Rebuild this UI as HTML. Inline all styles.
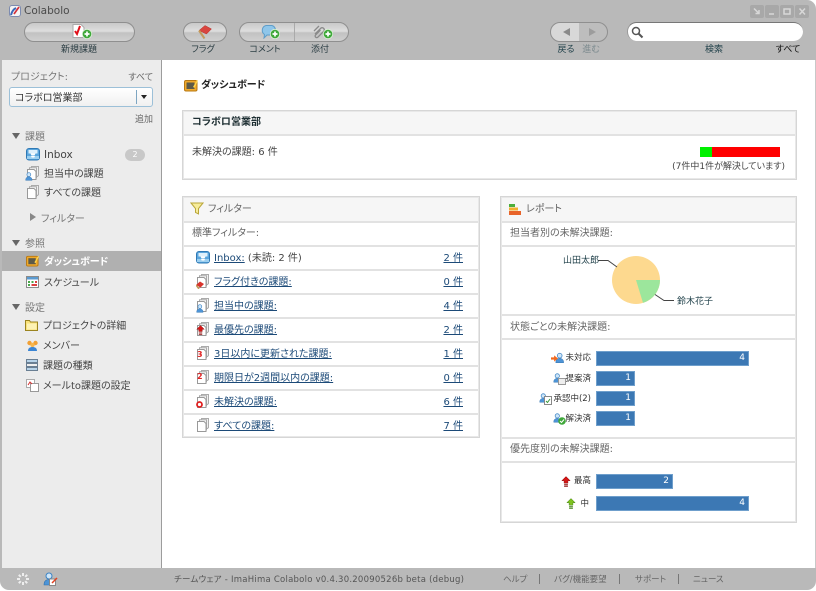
<!DOCTYPE html>
<html lang="ja"><head><meta charset="utf-8"><title>Colabolo</title>
<style>
html,body{margin:0;padding:0;background:#fff}
body{width:816px;height:591px;overflow:hidden;position:relative;font-family:"DejaVu Sans","Noto Sans CJK JP",sans-serif;font-size:10px;color:#444;font-feature-settings:"palt"}
.a{position:absolute;box-sizing:border-box}
.t{position:absolute;white-space:nowrap;line-height:16px;height:16px;font-size:10px;margin-top:3px}
.c{transform:translateX(-50%)}
.r{transform:translateX(-100%)}
.lb{font-size:9px;color:#2c3e44}
.sm{font-size:8.500px;color:#333}
.pill{position:absolute;box-sizing:border-box;height:20px;border:1px solid #8f8f8f;border-radius:10px;background:linear-gradient(#c9c9c9,#dedede 45%,#c2c2c2 55%,#cfcfcf)}
.p{position:absolute;box-sizing:border-box;border:1px solid #d6d6d6;box-shadow:0 0 0 1px #e8e8e8 inset}
.h{position:absolute;left:1px;right:1px;background:#f6f6f6}
.hr{position:absolute;left:1px;right:1px;height:2px;background:#e2e2e2}
a{color:#1c4a78;text-decoration:underline}
.bar{position:absolute;left:596px;height:15px;background:#3c78b4;border:1px solid #6f9fcc;box-sizing:border-box;color:#fff;text-align:right;font-size:9px;line-height:13px;padding-right:3px}
svg{position:absolute;display:block}
.tri{position:absolute;width:0;height:0}
.s{color:#555}
</style></head><body>
<svg width="0" height="0" style="position:absolute"><defs>
<symbol id="doc" viewBox="0 0 14 14"><path d="M5.500 .5h7v9l-1 1h-1V3.500h-5z" fill="#f0f0f0" stroke="#aaa"/><path d="M3.500 1.800h7v10h-7z" fill="#f4f4f4" stroke="#aaa"/><path d="M1.500 3.500h6.500l2 2v8h-8.500z" fill="#fff" stroke="#999"/></symbol>
<symbol id="inbox" viewBox="0 0 14 14"><rect x=".5" y="1.500" width="13" height="11.500" rx="2.500" fill="#5ba6dd" stroke="#2f79b5"/><rect x="2.500" y="3" width="9" height="3.500" fill="#dff0fb"/><path d="M4.500 6.500h5l-1 2h-3z" fill="#fff"/><path d="M1 9h12v3H1z" fill="#9bcff0"/><path d="M5 9l.7 1.500h2.600L9 9z" fill="#fff"/></symbol>
<symbol id="dash" viewBox="0 0 14 14"><rect x=".5" y="2.500" width="12.500" height="10.500" rx="1.500" fill="#f0aa2c" stroke="#b87812"/><rect x="2.500" y="4.500" width="8" height="6.500" fill="#5d5a48"/><path d="M9 9l4-7 1 .8-3.500 7z" fill="#ffd54a"/></symbol>
<symbol id="plus" viewBox="0 0 10 10"><circle cx="5" cy="5" r="4.700" fill="#3fa83a" stroke="#d9f0d4" stroke-width=".8"/><path d="M2.500 5h5M5 2.500v5" stroke="#fff" stroke-width="1.700"/></symbol>
<symbol id="user" viewBox="0 0 14 14"><circle cx="6" cy="4" r="3" fill="#cfe6f8" stroke="#3a82c4"/><path d="M1 13c0-4 2-5.500 5-5.500s5 1.500 5 5.500z" fill="#4d94d6" stroke="#2f70ad" stroke-width=".6"/></symbol>
<symbol id="upr" viewBox="0 0 12 14"><path d="M6 1l5 5H8.300v3H3.700V6H1z" fill="#d41616" stroke="#8c1010" stroke-width=".6"/><path d="M3.700 10.300h4.600v1.300H3.700zM3.700 12.300h4.600v1H3.700z" fill="#8c1010"/></symbol>
<symbol id="upg" viewBox="0 0 12 14"><path d="M6 1l5 5H8.300v3H3.700V6H1z" fill="#7fc21f" stroke="#3f7f12" stroke-width=".6"/><path d="M3.700 10.300h4.600v1.300H3.700zM3.700 12.300h4.600v1H3.700z" fill="#3f7f12"/></symbol>
</defs></svg>

<!-- chrome -->
<div class="a" style="left:0;top:0;width:816px;height:60px;background:#b9b9b9;border-radius:0 9px 0 0"></div>
<div class="a" style="left:0;top:60px;width:162px;height:508px;background:#ececec;border-left:2px solid #b9b9b9;border-right:1px solid #9c9c9c"></div>
<div class="a" style="left:0;top:568px;width:816px;height:22px;background:#b9b9b9;border-radius:0 0 9px 9px"></div>
<div class="a" style="left:815px;top:60px;width:1px;height:508px;background:#c8c8c8"></div>

<!-- title -->
<svg style="left:9px;top:5px" width="12" height="12" viewBox="0 0 12 12"><rect x=".5" y=".5" width="11" height="11" rx="2.500" fill="#f5f5f5" stroke="#7c8bb0"/><path d="M2 10c1-4 3-6 5-7" stroke="#3a68b8" stroke-width="2" fill="none"/><path d="M5 9l5-7" stroke="#d2303a" stroke-width="1.700"/></svg>
<div class="t" style="left:24px;top:0;font-size:10.500px;color:#4a4a4a">Colabolo</div>
<div class="a" style="left:750px;top:5px;width:14px;height:13px;background:#a8a8a8;border-radius:2px"></div>
<div class="a" style="left:765px;top:5px;width:14px;height:13px;background:#a8a8a8;border-radius:2px"></div>
<div class="a" style="left:780px;top:5px;width:14px;height:13px;background:#a8a8a8;border-radius:2px"></div>
<div class="a" style="left:795px;top:5px;width:14px;height:13px;background:#a8a8a8;border-radius:2px"></div>
<svg style="left:750px;top:5px" width="59" height="13" viewBox="0 0 59 13" fill="none" stroke="#d8d8d8" stroke-width="1.500"><path d="M4 3.500l5 5M9 5v3.500H5.500"/><path d="M19 9h5"/><rect x="34" y="4" width="6" height="5"/><path d="M49.500 3.500l5.500 6M55 3.500l-5.500 6"/></svg>

<!-- toolbar -->
<div class="pill" style="left:24px;top:22px;width:111px"></div>
<svg style="left:72px;top:24px" width="20" height="15" viewBox="0 0 20 15"><path d="M1 .5h8l3 3v10H1z" fill="#fff" stroke="#aaa"/><path d="M3 7l2 3 3-8" fill="none" stroke="#e0101a" stroke-width="2"/></svg>
<svg style="left:82px;top:29px" width="10" height="10"><use href="#plus"/></svg>
<div class="t c lb" style="left:79px;top:39px">新規課題</div>

<div class="pill" style="left:183px;top:22px;width:44px"></div>
<svg style="left:198px;top:24px" width="15" height="15" viewBox="0 0 15 15"><path d="M1 6.500l6-5 6.500 3.500-5 5z" fill="#d9453f" stroke="#b3322c" stroke-width=".5"/><path d="M1 6.500l5.500 8" stroke="#c49a5a" stroke-width="2"/></svg>
<div class="t c lb" style="left:203px;top:39px">フラグ</div>

<div class="pill" style="left:239px;top:22px;width:110px"></div>
<div class="a" style="left:294px;top:23px;width:1px;height:18px;background:#aaa"></div>
<svg style="left:260px;top:25px" width="18" height="14" viewBox="0 0 18 14"><path d="M6 .5h6a5 5 0 0 1 0 9.500H7L4 13l.5-3.500A5 5 0 0 1 6 .5z" fill="#8fc6ea" stroke="#5f9dc8"/></svg>
<svg style="left:270px;top:29px" width="10" height="10"><use href="#plus"/></svg>
<div class="t c lb" style="left:265px;top:39px">コメント</div>
<svg style="left:313px;top:25px" width="14" height="14" viewBox="0 0 14 14" fill="none" stroke="#8a8a8a" stroke-width="1.300"><path d="M2 9l6-6a2.200 2.200 0 0 1 3 3l-6 6a1.500 1.500 0 0 1-2.500-2l5-5"/><path d="M1 6l5-5"/></svg>
<svg style="left:323px;top:29px" width="10" height="10"><use href="#plus"/></svg>
<div class="t c lb" style="left:320px;top:39px">添付</div>

<div class="pill" style="left:550px;top:22px;width:58px;background:linear-gradient(90deg,#d8d8d8,#d8d8d8 50%,#bdbdbd 50%,#bdbdbd)"></div>
<div class="tri" style="left:563px;top:28px;border:4px solid transparent;border-left:0;border-right:7px solid #8a8a8a"></div>
<div class="tri" style="left:589px;top:28px;border:4px solid transparent;border-right:0;border-left:7px solid #9c9c9c"></div>
<div class="t c lb" style="left:566px;top:39px;color:#1e3f48">戻る</div>
<div class="t c lb" style="left:591px;top:39px;color:#7c8a8e">進む</div>

<div class="a" style="left:627px;top:22px;width:176px;height:19px;background:#fff;border-radius:10px;border-top:1px solid #777;border-left:1px solid #999"></div>
<svg style="left:631px;top:26px" width="13" height="13" viewBox="0 0 13 13" fill="none" stroke="#555" stroke-width="1.500"><circle cx="5" cy="5" r="3.500"/><path d="M7.500 7.500l4 4" stroke-width="2"/></svg>
<div class="t c lb" style="left:714px;top:39px;color:#1e3f48">検索</div>
<div class="t c lb" style="left:788px;top:39px;color:#111">すべて</div>

<!-- sidebar -->
<div class="t s" style="left:11px;top:67px;color:#777">プロジェクト:</div>
<div class="t r lb" style="left:153px;top:67px;color:#666">すべて</div>
<div class="a" style="left:9px;top:87px;width:144px;height:20px;background:linear-gradient(#fff,#f0f0f0);border:1px solid #9cc0d8;border-radius:3px"></div>
<div class="a" style="left:136px;top:90px;width:1px;height:14px;background:#7ea6c2"></div>
<div class="tri" style="left:141px;top:95px;border:3px solid transparent;border-bottom:0;border-top:4px solid #222"></div>
<div class="t" style="left:15px;top:88px;color:#333">コラボロ営業部</div>
<div class="t r lb" style="left:153px;top:109px;color:#666">追加</div>

<div class="tri" style="left:12px;top:133px;border:4px solid transparent;border-bottom:0;border-top:6px solid #666"></div>
<div class="t" style="left:25px;top:127px;color:#777">課題</div>
<svg style="left:26px;top:147px" width="14" height="14"><use href="#inbox"/></svg>
<div class="t" style="left:44px;top:144px;font-size:10.500px;color:#444">Inbox</div>
<div class="a" style="left:125px;top:149px;width:20px;height:12px;background:#c8c8c8;border-radius:6px;color:#fff;font-size:8px;line-height:12px;text-align:center">2</div>
<svg style="left:26px;top:166px" width="14" height="14"><use href="#doc"/></svg>
<svg style="left:25px;top:172px" width="9" height="9"><use href="#user"/></svg>
<div class="t" style="left:44px;top:164px">担当中の課題</div>
<svg style="left:26px;top:185px" width="14" height="14"><use href="#doc"/></svg>
<div class="t" style="left:44px;top:183px">すべての課題</div>
<div class="tri" style="left:30px;top:213px;border:4px solid transparent;border-right:0;border-left:6px solid #888"></div>
<div class="t" style="left:41px;top:209px;color:#777">フィルター</div>

<div class="tri" style="left:12px;top:240px;border:4px solid transparent;border-bottom:0;border-top:6px solid #666"></div>
<div class="t" style="left:25px;top:234px;color:#777">参照</div>
<div class="a" style="left:2px;top:251px;width:159px;height:20px;background:#b0b0b0"></div>
<svg style="left:26px;top:254px" width="13" height="13"><use href="#dash"/></svg>
<div class="t" style="left:44px;top:252px;color:#fff;font-weight:bold">ダッシュボード</div>
<svg style="left:26px;top:276px" width="13" height="12" viewBox="0 0 13 12"><rect x=".5" y=".5" width="12" height="11" fill="#fff" stroke="#8a8a8a"/><path d="M1 1h11v2.500H1z" fill="#5a9ad0"/><path d="M2 5h2v2H2zM5.500 5h2v2h-2zM2 8h2v2H2z" fill="#4aa84a"/><path d="M9 5h2v2H9zM5.500 8h5.500v2H5.500z" fill="#d84040"/></svg>
<div class="t" style="left:44px;top:273px">スケジュール</div>

<div class="tri" style="left:12px;top:304px;border:4px solid transparent;border-bottom:0;border-top:6px solid #666"></div>
<div class="t" style="left:25px;top:298px;color:#777">設定</div>
<svg style="left:25px;top:319px" width="13" height="12" viewBox="0 0 13 12"><path d="M.5 1.500h4l1 1.500h7v8.500H.500z" fill="#f9e27a" stroke="#9b8420"/><path d="M2 4.500h9.500v6H2z" fill="#fdf2b4"/></svg>
<div class="t" style="left:43px;top:316px">プロジェクトの詳細</div>
<svg style="left:26px;top:340px" width="13" height="11" viewBox="0 0 13 11"><circle cx="3.500" cy="3" r="2.200" fill="#f1a035"/><circle cx="9.500" cy="3" r="2.200" fill="#f1a035"/><circle cx="6.500" cy="5" r="2.200" fill="#f6b64e"/><path d="M2 11c0-3 2-4 4.500-4s4.500 1 4.500 4z" fill="#3b85d4"/></svg>
<div class="t" style="left:43px;top:336px">メンバー</div>
<svg style="left:26px;top:359px" width="12" height="12" viewBox="0 0 12 12"><rect x=".5" y=".5" width="11" height="3" fill="#b8d4ea" stroke="#6a7f93"/><rect x=".5" y="4.500" width="11" height="3" fill="#f0f0f0" stroke="#6a7f93"/><rect x=".5" y="8.500" width="11" height="3" fill="#b8d4ea" stroke="#6a7f93"/></svg>
<div class="t" style="left:43px;top:356px">課題の種類</div>
<svg style="left:26px;top:379px" width="13" height="13" viewBox="0 0 13 13"><rect x=".5" y=".5" width="8" height="8" fill="#fff" stroke="#aaa"/><rect x="4.500" y="4.500" width="8" height="8" fill="#fff" stroke="#999"/><path d="M2 6l2-3 2 2" fill="none" stroke="#d83030"/></svg>
<div class="t" style="left:43px;top:376px">メールto課題の設定</div>

<!-- main -->
<svg style="left:184px;top:78px" width="14" height="14"><use href="#dash"/></svg>
<div class="t" style="left:201px;top:75px;color:#222;font-weight:bold">ダッシュボード</div>

<div class="p" style="left:182px;top:110px;width:615px;height:70px">
 <div class="h" style="top:1px;height:23px"></div><div class="hr" style="top:23px"></div>
</div>
<div class="t" style="left:192px;top:112px;color:#1e2f33;font-weight:bold">コラボロ営業部</div>
<div class="t" style="left:192px;top:142px;color:#444">未解決の課題: 6 件</div>
<div class="a" style="left:700px;top:147px;width:12px;height:10px;background:#00f000"></div>
<div class="a" style="left:712px;top:147px;width:68px;height:10px;background:#ff0000"></div>
<div class="t r lb" style="left:785px;top:156px;color:#444">(7件中1件が解決しています)</div>

<!-- filter panel -->
<div class="p" style="left:182px;top:196px;width:298px;height:242px">
 <div class="h" style="top:1px;height:24px"></div><div class="hr" style="top:24px"></div>
 <div class="hr" style="top:48px"></div><div class="hr" style="top:72px"></div><div class="hr" style="top:96px"></div>
 <div class="hr" style="top:120px"></div><div class="hr" style="top:144px"></div><div class="hr" style="top:168px"></div><div class="hr" style="top:192px"></div><div class="hr" style="top:216px"></div>
</div>
<svg style="left:190px;top:202px" width="14" height="13" viewBox="0 0 14 13"><path d="M1 1h12L8.500 6.500V12l-3-1.500v-4z" fill="#f7ec9a" stroke="#b9a63a"/></svg>
<div class="t" style="left:208px;top:199px;color:#666">フィルター</div>
<div class="t" style="left:192px;top:223px;color:#666">標準フィルター:</div>

<svg style="left:196px;top:250px" width="14" height="14"><use href="#inbox"/></svg>
<div class="t" style="left:214px;top:248px"><a>Inbox:</a> <span style="color:#444">(未読: 2 件)</span></div>
<div class="t r" style="left:463px;top:248px"><a>2 件</a></div>
<svg style="left:196px;top:274px" width="14" height="14"><use href="#doc"/></svg>
<svg style="left:196px;top:281px" width="8" height="8" viewBox="0 0 8 8"><path d="M0 4l4-3.500 4 2.500-3.500 3.500z" fill="#d8332c"/><path d="M0 4l3 4" stroke="#c49a5a" stroke-width="1.500"/></svg>
<div class="t" style="left:214px;top:272px"><a>フラグ付きの課題:</a></div>
<div class="t r" style="left:463px;top:272px"><a>0 件</a></div>
<svg style="left:196px;top:298px" width="14" height="14"><use href="#doc"/></svg>
<svg style="left:196px;top:304px" width="9" height="9"><use href="#user"/></svg>
<div class="t" style="left:214px;top:296px"><a>担当中の課題:</a></div>
<div class="t r" style="left:463px;top:296px"><a>4 件</a></div>
<svg style="left:196px;top:322px" width="14" height="14"><use href="#doc"/></svg>
<svg style="left:196px;top:324px" width="9" height="12"><use href="#upr"/></svg>
<div class="t" style="left:214px;top:320px"><a>最優先の課題:</a></div>
<div class="t r" style="left:463px;top:320px"><a>2 件</a></div>
<svg style="left:196px;top:346px" width="14" height="14"><use href="#doc"/></svg>
<div class="t" style="left:197px;top:344px;font-size:8px;color:#e02020;font-weight:bold">3</div>
<div class="t" style="left:214px;top:344px"><a>3日以内に更新された課題:</a></div>
<div class="t r" style="left:463px;top:344px"><a>1 件</a></div>
<svg style="left:196px;top:370px" width="14" height="14"><use href="#doc"/></svg>
<div class="t" style="left:197px;top:366px;font-size:8px;color:#e02020;font-weight:bold">2</div>
<div class="t" style="left:214px;top:368px"><a>期限日が2週間以内の課題:</a></div>
<div class="t r" style="left:463px;top:368px"><a>0 件</a></div>
<svg style="left:196px;top:394px" width="14" height="14"><use href="#doc"/></svg>
<svg style="left:196px;top:401px" width="7" height="7" viewBox="0 0 7 7"><circle cx="3.500" cy="3.500" r="2.500" fill="#fff" stroke="#e02020" stroke-width="1.800"/></svg>
<div class="t" style="left:214px;top:392px"><a>未解決の課題:</a></div>
<div class="t r" style="left:463px;top:392px"><a>6 件</a></div>
<svg style="left:196px;top:418px" width="14" height="14"><use href="#doc"/></svg>
<div class="t" style="left:214px;top:416px"><a>すべての課題:</a></div>
<div class="t r" style="left:463px;top:416px"><a>7 件</a></div>

<!-- report panel -->
<div class="p" style="left:500px;top:196px;width:297px;height:327px">
 <div class="h" style="top:1px;height:24px"></div><div class="hr" style="top:24px"></div>
 <div class="hr" style="top:48px"></div><div class="hr" style="top:117px"></div><div class="hr" style="top:141px"></div>
 <div class="hr" style="top:240px"></div><div class="hr" style="top:264px"></div>
</div>
<svg style="left:508px;top:203px" width="14" height="13" viewBox="0 0 14 13"><rect x="1" y="1" width="6" height="3" fill="#4cae3c"/><rect x="1" y="4.500" width="9" height="3" fill="#f0b030"/><rect x="1" y="8" width="12" height="4" fill="#e8642a"/></svg>
<div class="t" style="left:526px;top:199px;color:#666">レポート</div>
<div class="t" style="left:510px;top:223px;color:#666">担当者別の未解決課題:</div>
<svg style="left:560px;top:250px" width="160" height="60" viewBox="560 250 160 60">
 <circle cx="636" cy="280" r="24" fill="#fdd98f"/>
 <path d="M636 280h24a24 24 0 0 1-17 22.900z" fill="#9ce69c"/>
 <path d="M598 260.500h10l9 6.500M655 294.500l9 6h10" fill="none" stroke="#444"/>
</svg>
<div class="t lb" style="left:563px;top:250px;color:#1e3f48">山田太郎</div>
<div class="t lb" style="left:677px;top:291px;color:#1e3f48">鈴木花子</div>

<div class="t" style="left:510px;top:317px;color:#666">状態ごとの未解決課題:</div>
<svg style="left:555px;top:351px" width="11" height="14"><use href="#user"/></svg>
<svg style="left:551px;top:355px" width="7" height="7" viewBox="0 0 9 8"><path d="M0 2.500h4V0l5 4-5 4V5.500H0z" fill="#f2691e"/></svg>
<div class="t r sm" style="left:591px;top:347px">未対応</div>
<div class="bar" style="top:351px;width:153px">4</div>
<svg style="left:553px;top:371px" width="10" height="14"><use href="#user"/></svg>
<svg style="left:558px;top:378px" width="8" height="7" viewBox="0 0 8 7"><rect x=".5" y=".5" width="7" height="6" fill="#eee" stroke="#999"/></svg>
<div class="t r sm" style="left:591px;top:368px">提案済</div>
<div class="bar" style="top:371px;width:39px">1</div>
<svg style="left:539px;top:391px" width="10" height="14"><use href="#user"/></svg>
<svg style="left:544px;top:396px" width="8" height="9" viewBox="0 0 8 9"><rect x=".5" y=".5" width="7" height="8" fill="#fff" stroke="#888"/><path d="M2 5l1.500 1.500L6 3" stroke="#3a9a3a" fill="none"/></svg>
<div class="t r sm" style="left:591px;top:388px">承認中(2)</div>
<div class="bar" style="top:391px;width:39px">1</div>
<svg style="left:553px;top:411px" width="10" height="14"><use href="#user"/></svg>
<svg style="left:558px;top:417px" width="8" height="8" viewBox="0 0 8 8"><circle cx="4" cy="4" r="3.800" fill="#3fa83a"/><path d="M2 4l1.500 1.500L6 2.500" stroke="#fff" fill="none"/></svg>
<div class="t r sm" style="left:591px;top:408px">解決済</div>
<div class="bar" style="top:411px;width:39px">1</div>

<div class="t" style="left:510px;top:439px;color:#666">優先度別の未解決課題:</div>
<svg style="left:561px;top:475px" width="10" height="13"><use href="#upr"/></svg>
<div class="t r sm" style="left:591px;top:470px">最高</div>
<div class="bar" style="top:474px;width:77px">2</div>
<svg style="left:566px;top:497px" width="10" height="13"><use href="#upg"/></svg>
<div class="t r sm" style="left:589px;top:493px">中</div>
<div class="bar" style="top:496px;width:153px">4</div>

<!-- footer -->
<svg style="left:16px;top:572px" width="14" height="14" viewBox="0 0 14 14" stroke="#eee" stroke-width="2"><path d="M7 1v3M7 10v3M1 7h3M10 7h3M2.800 2.800l2 2M9.200 9.200l2 2M11.200 2.800l-2 2M4.800 9.200l-2 2"/></svg>
<svg style="left:43px;top:572px" width="14" height="14"><use href="#user"/></svg>
<svg style="left:49px;top:577px" width="9" height="9" viewBox="0 0 9 9"><rect x=".5" y="2" width="6" height="6.500" fill="#fff" stroke="#888"/><path d="M3 6l5-5" stroke="#e04020" stroke-width="1.500"/></svg>
<div class="t" style="left:174px;top:569px;font-size:8.500px;color:#555;letter-spacing:.24px">チームウェア - ImaHima Colabolo v0.4.30.20090526b beta (debug)</div>
<div class="t sm" style="left:503px;top:569px;color:#666">ヘルプ</div>
<div class="a" style="left:539px;top:574px;width:1px;height:10px;background:#777"></div>
<div class="t sm" style="left:554px;top:569px;color:#666">バグ/機能要望</div>
<div class="a" style="left:619px;top:574px;width:1px;height:10px;background:#777"></div>
<div class="t sm" style="left:635px;top:569px;color:#666">サポート</div>
<div class="a" style="left:678px;top:574px;width:1px;height:10px;background:#777"></div>
<div class="t sm" style="left:693px;top:569px;color:#666">ニュース</div>
</body></html>
